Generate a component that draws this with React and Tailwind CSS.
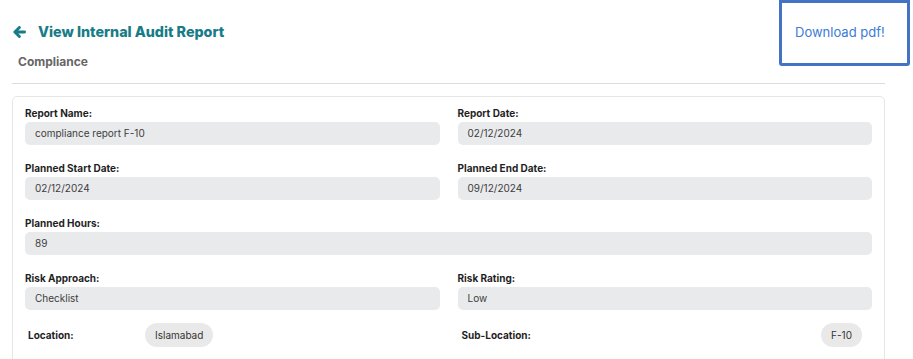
import React from "react";

const font = { fontFamily: "Inter, 'Noto Sans', sans-serif" };

const Field = ({ label, value, full }) => (
  <div className={full ? "col-span-2" : ""}>
    <p className="mb-[2px] text-[10px] leading-[14px] font-bold text-[#1f1f1f]">{label}</p>
    <div className="h-[23px] rounded-[5px] bg-[#e9eaec] px-[10px] flex items-center text-[10px] text-[#3d3d3d]">
      {value}
    </div>
  </div>
);

const App = () => {
  return (
    <div className="relative w-[913px] h-[359px] overflow-hidden bg-white" style={font}>
      <div className="pl-3 pr-[28px]">
        <div className="h-[62px] flex items-center gap-3 pl-[1px] pt-[1px]">
          <svg width="13" height="12" viewBox="0 0 13 12" fill="none">
            <path d="M11.6 6H2.2M6.4 1.4L1.8 6l4.6 4.6" stroke="#177c87" strokeWidth="2.8" strokeLinecap="round" strokeLinejoin="round" />
          </svg>
          <h1 className="text-[14.3px] font-extrabold text-[#177c87]">View Internal Audit Report</h1>
        </div>
        <p className="pl-[6px] text-[12px] font-bold text-[#666] leading-none -mt-[6px]">Compliance</p>
        <div className="mt-[15px] border-t border-[#dcdcdc]" />

        <div className="mt-3 rounded-[5px] border border-[#e6e6e6] px-3 pt-[9px] pb-4">
          <div className="grid grid-cols-2 gap-x-[18px] gap-y-[16px]">
            <Field label="Report Name:" value="compliance report F-10" />
            <Field label="Report Date:" value="02/12/2024" />
            <Field label="Planned Start Date:" value="02/12/2024" />
            <Field label="Planned End Date:" value="09/12/2024" />
            <Field label="Planned Hours:" value="89" full />
            <Field label="Risk Approach:" value="Checklist" />
            <Field label="Risk Rating:" value="Low" />
          </div>
          <div className="mt-[13px] grid grid-cols-2 gap-x-[18px]">
            <div className="flex items-center pl-[3px]">
              <span className="w-[117px] text-[10px] font-bold text-[#1f1f1f]">Location:</span>
              <span className="h-[24px] px-[10px] rounded-full bg-[#e9e9e9] flex items-center text-[10px] text-[#333]">Islamabad</span>
            </div>
            <div className="flex items-center justify-between pl-[4px] pr-[10px]">
              <span className="text-[10px] font-bold text-[#1f1f1f]">Sub-Location:</span>
              <span className="h-[24px] px-[10px] rounded-full bg-[#e9e9e9] flex items-center text-[10px] text-[#333]">F-10</span>
            </div>
          </div>
        </div>
      </div>

      <div className="absolute top-0 left-[779px] w-[131px] h-[66px] border-[3px] border-[#4472c4] rounded-b-[3px] bg-white flex items-center pl-[13px]">
        <span className="text-[13px] text-[#3a7bd5]">Download pdf!</span>
      </div>
    </div>
  );
};

export default App;
